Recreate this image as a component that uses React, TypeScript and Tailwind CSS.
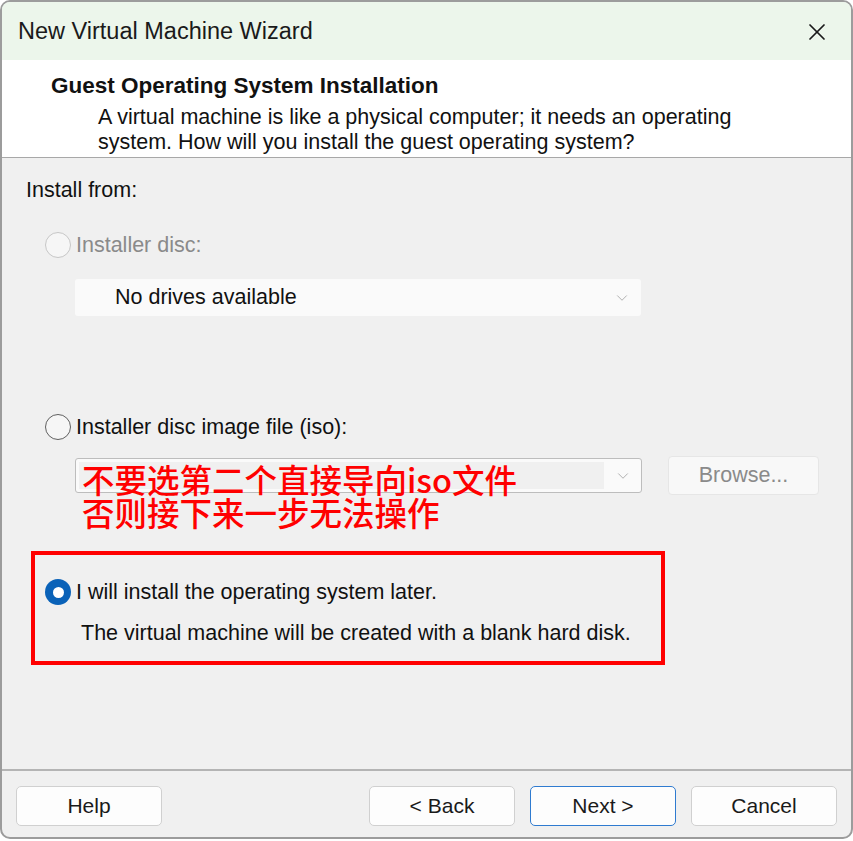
import { ChevronDown, X } from 'lucide-react'

const font = { fontFamily: '"Liberation Sans", Arial, sans-serif' }

function Radio({ state }: { state: 'disabled' | 'off' | 'on' }) {
  if (state === 'on') {
    return (
      <span className="flex h-[26px] w-[26px] shrink-0 items-center justify-center rounded-full bg-[#0a62b8]">
        <span className="h-[11px] w-[11px] rounded-full bg-white" />
      </span>
    )
  }
  return (
    <span
      className={
        state === 'disabled'
          ? 'h-[26px] w-[26px] shrink-0 rounded-full border-[1.5px] border-[#c6c6c6] bg-[#f6f6f6]'
          : 'h-[26px] w-[26px] shrink-0 rounded-full border-[1.5px] border-[#606060] bg-[#f6f6f6]'
      }
    />
  )
}

function Button({ label, primary }: { label: string; primary?: boolean }) {
  return (
    <button
      className={
        'h-[40px] w-[146px] rounded-[5px] bg-[#fdfdfd] text-[21px] text-[#1a1a1a] ' +
        (primary ? 'border-[1.5px] border-[#2f7bd0]' : 'border border-[#d0d0d0]')
      }
    >
      {label}
    </button>
  )
}

export default function App() {
  return (
    <div className="h-[841px] w-[853px] bg-white" style={font}>
      <div className="flex h-[839px] w-[853px] flex-col overflow-hidden rounded-[10px] border-2 border-[#9c9c9c] bg-[#f0f0f0]">
        <div className="flex h-[58px] shrink-0 items-center justify-between bg-[#ecf6eb] pl-[16px] pr-[20px] pt-[2px]">
          <span className="text-[23.5px] text-[#1a1a1a]">New Virtual Machine Wizard</span>
          <X className="h-[28px] w-[28px] text-[#1a1a1a]" strokeWidth={1.5} />
        </div>

        <div className="h-[98px] shrink-0 border-b border-[#a8a8a8] bg-white pl-[49px] pt-[13px]">
          <div className="text-[22.5px] font-bold leading-[26px] text-[#111]">
            Guest Operating System Installation
          </div>
          <div className="mt-[6px] pl-[47px] text-[21.5px] leading-[25px] text-[#111]">
            A virtual machine is like a physical computer; it needs an operating
            <br />
            system. How will you install the guest operating system?
          </div>
        </div>

        <div className="relative flex flex-1 flex-col pl-[24px] pt-[19px]">
          <div className="text-[21.5px] leading-[26px] text-[#111]">Install from:</div>

          <div className="mt-[29px] flex h-[26px] items-center gap-[5px] pl-[19px]">
            <Radio state="disabled" />
            <span className="text-[21.5px] leading-[26px] text-[#8a8a8a]">Installer disc:</span>
          </div>

          <div className="ml-[49px] mt-[21px] flex h-[37px] w-[566px] items-center justify-between rounded-[3px] bg-[#fafafa] pl-[40px] pr-[10px]">
            <span className="text-[21.5px] text-[#111]">No drives available</span>
            <ChevronDown className="h-[18px] w-[18px] text-[#a8a8a8]" strokeWidth={1.2} />
          </div>

          <div className="mt-[98px] flex h-[26px] items-center gap-[5px] pl-[19px]">
            <Radio state="off" />
            <span className="text-[21.5px] leading-[26px] text-[#111]">Installer disc image file (iso):</span>
          </div>

          <div className="ml-[49px] mt-[16px] flex h-[39px] items-center gap-[26px]">
            <div className="flex h-[35px] w-[567px] items-center rounded-[3px] border border-[#bdbdbd] bg-[#fafafa] p-[3px]">
              <div className="h-full w-[525px] bg-[#f0f0f0]" />
              <ChevronDown className="ml-[10px] h-[18px] w-[18px] text-[#a8a8a8]" strokeWidth={1.2} />
            </div>
            <div className="flex h-[39px] w-[151px] items-center justify-center rounded-[4px] border border-[#e6e6e6] bg-[#f8f8f8] text-[21.5px] text-[#8a8a8a]">
              Browse...
            </div>
          </div>

          <div
            className="absolute left-[80px] top-[304px] text-[32.5px] leading-[33px] text-[#ff0000]"
            style={{ fontFamily: '"Noto Sans CJK SC", "Liberation Sans", sans-serif', fontWeight: 500 }}
          >
            不要选第二个直接导向iso文件
            <br />
            否则接下来一步无法操作
          </div>

          <div className="ml-[5px] mt-[56px] h-[114px] w-[634px] border-[4px] border-[#ff0000] pl-[10px] pt-[24px]">
            <div className="flex h-[26px] items-center gap-[5px]">
              <Radio state="on" />
              <span className="text-[21.5px] leading-[26px] text-[#111]">I will install the operating system later.</span>
            </div>
            <div className="mt-[15px] pl-[36px] text-[21.5px] leading-[26px] text-[#111]">
              The virtual machine will be created with a blank hard disk.
            </div>
          </div>
        </div>

        <div className="h-[68px] shrink-0 border-t-2 border-[#b4b4b4] pt-[15px]">
          <div className="flex items-center pl-[14px] pr-[14px]">
            <Button label="Help" />
            <div className="ml-auto flex gap-[15px]">
              <Button label="< Back" />
              <Button label="Next >" primary />
              <Button label="Cancel" />
            </div>
          </div>
        </div>
      </div>
    </div>
  )
}
